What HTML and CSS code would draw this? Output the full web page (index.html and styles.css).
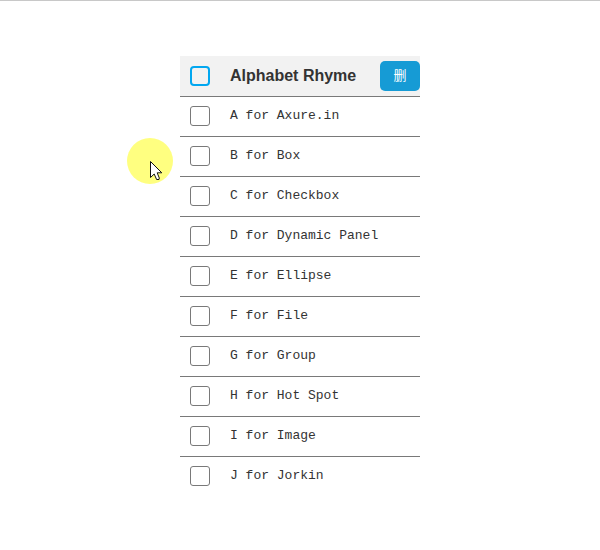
FILE: index.html
```html
<!DOCTYPE html>
<html lang="en">
<head>
<meta charset="utf-8">
<meta name="viewport" content="width=device-width, initial-scale=1">
<title>Alphabet Rhyme</title>
<link rel="stylesheet" href="styles.css">
</head>
<body>
<main class="list">
  <header class="row row-head">
    <input class="check check-all" type="checkbox" id="all">
    <label class="title" for="all">Alphabet Rhyme</label>
    <button class="delete" type="button" lang="zh">删</button>
  </header>
  <div class="row"><input class="check" type="checkbox" id="a"><label for="a">A for Axure.in</label></div>
  <div class="row"><input class="check" type="checkbox" id="b"><label for="b">B for Box</label></div>
  <div class="row"><input class="check" type="checkbox" id="c"><label for="c">C for Checkbox</label></div>
  <div class="row"><input class="check" type="checkbox" id="d"><label for="d">D for Dynamic Panel</label></div>
  <div class="row"><input class="check" type="checkbox" id="e"><label for="e">E for Ellipse</label></div>
  <div class="row"><input class="check" type="checkbox" id="f"><label for="f">F for File</label></div>
  <div class="row"><input class="check" type="checkbox" id="g"><label for="g">G for Group</label></div>
  <div class="row"><input class="check" type="checkbox" id="h"><label for="h">H for Hot Spot</label></div>
  <div class="row"><input class="check" type="checkbox" id="i"><label for="i">I for Image</label></div>
  <div class="row"><input class="check" type="checkbox" id="j"><label for="j">J for Jorkin</label></div>
</main>
<div class="pointer" aria-hidden="true">
  <svg class="arrow" width="13" height="20" viewBox="0 0 13 20">
    <path d="M.5 .5V16.5L4.2 13L6.6 18.5H9L9.3 17L7.2 11.8H11.8Z" fill="#fff" stroke="#111" stroke-width="1"/>
  </svg>
</div>
</body>
</html>
```

FILE: styles.css
```css
* {
  box-sizing: border-box;
}

body {
  margin: 0;
  padding: 55px 16px;
  border-top: 1px solid #c8c8c8;
  background: #fff;
  color: #333;
  font: 13px/20px "Liberation Mono", "Courier New", monospace;
}

.list {
  max-width: 240px;
  margin: 0 auto;
}

.row {
  display: flex;
  align-items: center;
  gap: 20px;
  min-height: 40px;
  padding: 0 0 1px 10px;
  border-top: 1px solid #797979;
}

.row-head {
  padding-bottom: 0;
  border-top: 0;
  background: #f2f2f2;
}

.check {
  appearance: none;
  flex: none;
  width: 20px;
  height: 20px;
  margin: 0;
  border: 1px solid #797979;
  border-radius: 3px;
  background: #fff;
}

.check-all {
  border: 2px solid #02a7f0;
  border-radius: 4px;
  background: #f2f2f2;
}

.title {
  font: bold 16px/20px "Liberation Sans", Arial, sans-serif;
}

.delete {
  width: 40px;
  height: 30px;
  margin-left: auto;
  padding: 0;
  border: 0;
  border-radius: 5px;
  background: #169bd5;
  color: #fff;
  font: 13px/20px "Liberation Sans", "Noto Sans CJK SC", sans-serif;
}

.pointer {
  position: absolute;
  top: 138px;
  left: calc(50% - 173px);
  width: 46px;
  height: 46px;
  border-radius: 50%;
  background: #ffff80;
}

.arrow {
  position: absolute;
  top: 23px;
  left: 23px;
}
```
